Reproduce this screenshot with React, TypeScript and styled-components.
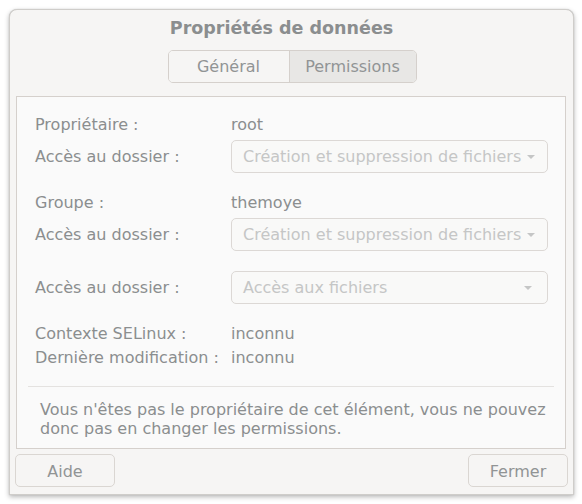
import React from "react";
import styled, { createGlobalStyle, css } from "styled-components";

const Global = createGlobalStyle`
  html, body {
    margin: 0;
    padding: 0;
    background: #ffffff;
  }
  body {
    font-family: "DejaVu Sans", "Noto Sans", sans-serif;
    font-size: 16px;
  }
`;

const Page = styled.div`
  width: 582px;
  height: 504px;
  padding: 9px 8px 0 9px;
  box-sizing: border-box;
`;

const Window = styled.div`
  display: flex;
  flex-direction: column;
  width: 565px;
  height: 486px;
  box-sizing: border-box;
  background: #f6f5f4;
  border: 1px solid #cfcdca;
  border-radius: 8px 8px 0 0;
  box-shadow: 0 2px 5px rgba(0, 0, 0, 0.28), 0 0 1px rgba(0, 0, 0, 0.2);
  color: #8b8e8f;
`;

const Header = styled.div`
  height: 34px;
  padding: 2px 20px 0 0;
  box-sizing: border-box;
  display: flex;
  align-items: center;
  justify-content: center;
  font-weight: bold;
  font-size: 17.5px;
  color: #8b8e8f;
`;

const TabRow = styled.div`
  display: flex;
  justify-content: center;
  margin-top: 6px;
  padding-left: 1px;
`;

const Switcher = styled.div`
  display: flex;
  height: 33px;
  border: 1px solid #d5d0cc;
  border-radius: 5px;
  box-sizing: border-box;
  overflow: hidden;
`;

const Tab = styled.div<{ active?: boolean }>`
  display: flex;
  align-items: center;
  justify-content: center;
  width: ${(p) => (p.active ? "126px" : "120px")};
  background: #f6f5f4;
  color: #919495;
  ${(p) =>
    p.active &&
    css`
      background: #e8e7e5;
      border-left: 1px solid #d5d0cc;
    `}
`;

const Frame = styled.div`
  margin: 13px 7px 0 6px;
  height: 353px;
  box-sizing: border-box;
  border: 1px solid #d5d0cc;
  background: #fafafa;
  display: flex;
  flex-direction: column;
`;

const Grid = styled.div`
  display: grid;
  grid-template-columns: 196px 317px;
  align-items: center;
  padding: 18px 0 0 18px;
`;

const Label = styled.div<{ gap?: number }>`
  height: 18px;
  line-height: 20px;
  white-space: nowrap;
  margin-top: ${(p) => p.gap ?? 0}px;
`;

const Value = styled(Label)`
  color: #8b8e8f;
`;

const ComboLabel = styled.div<{ gap?: number }>`
  margin-top: ${(p) => p.gap ?? 0}px;
  white-space: nowrap;
`;

const Combo = styled.div<{ gap?: number }>`
  margin-top: ${(p) => p.gap ?? 0}px;
  height: 33px;
  box-sizing: border-box;
  border: 1px solid #dcd8d5;
  border-radius: 5px;
  background: #f9f9f8;
  color: #c5c6c6;
  display: flex;
  align-items: center;
  justify-content: space-between;
  padding: 0 15px 0 11px;
  white-space: nowrap;
`;

const Arrow = styled.span`
  width: 0;
  height: 0;
  border-left: 4px solid transparent;
  border-right: 4px solid transparent;
  border-top: 4px solid #c5c6c6;
  margin-left: 6px;
`;

const Divider = styled.div`
  height: 1px;
  background: #e4e2e0;
  margin: 20px 11px 0 11px;
`;

const Message = styled.p`
  margin: 13px 0 0 23px;
  width: 512px;
  line-height: 19px;
  color: #8b8e8f;
`;

const Footer = styled.div`
  display: flex;
  justify-content: space-between;
  padding: 5px 5px 0 5px;
`;

const Button = styled.div`
  width: 100px;
  height: 33px;
  box-sizing: border-box;
  border: 1px solid #dad6d2;
  border-radius: 5px;
  background: #f6f5f4;
  display: flex;
  align-items: center;
  justify-content: center;
  padding-top: 1px;
  color: #919495;
`;

const Select = ({ text, gap }: { text: string; gap?: number }) => (
  <Combo gap={gap}>
    <span>{text}</span>
    <Arrow />
  </Combo>
);

export default function App() {
  return (
    <Page>
      <Global />
      <Window>
        <Header>Propriétés de données</Header>
        <TabRow>
          <Switcher>
            <Tab>Général</Tab>
            <Tab active>Permissions</Tab>
          </Switcher>
        </TabRow>
        <Frame>
          <Grid>
            <Label>Propriétaire :</Label>
            <Value>root</Value>
            <ComboLabel gap={7}>Accès au dossier :</ComboLabel>
            <Select gap={7} text="Création et suppression de fichiers" />
            <Label gap={20}>Groupe :</Label>
            <Value gap={20}>themoye</Value>
            <ComboLabel gap={7}>Accès au dossier :</ComboLabel>
            <Select gap={7} text="Création et suppression de fichiers" />
            <ComboLabel gap={20}>Accès au dossier :</ComboLabel>
            <Select gap={20} text="Accès aux fichiers" />
            <Label gap={20}>Contexte SELinux :</Label>
            <Value gap={20}>inconnu</Value>
            <Label gap={6}>Dernière modification :</Label>
            <Value gap={6}>inconnu</Value>
          </Grid>
          <Divider />
          <Message>
            Vous n'êtes pas le propriétaire de cet élément, vous ne pouvez donc pas en changer
            les permissions.
          </Message>
        </Frame>
        <Footer>
          <Button>Aide</Button>
          <Button>Fermer</Button>
        </Footer>
      </Window>
    </Page>
  );
}
